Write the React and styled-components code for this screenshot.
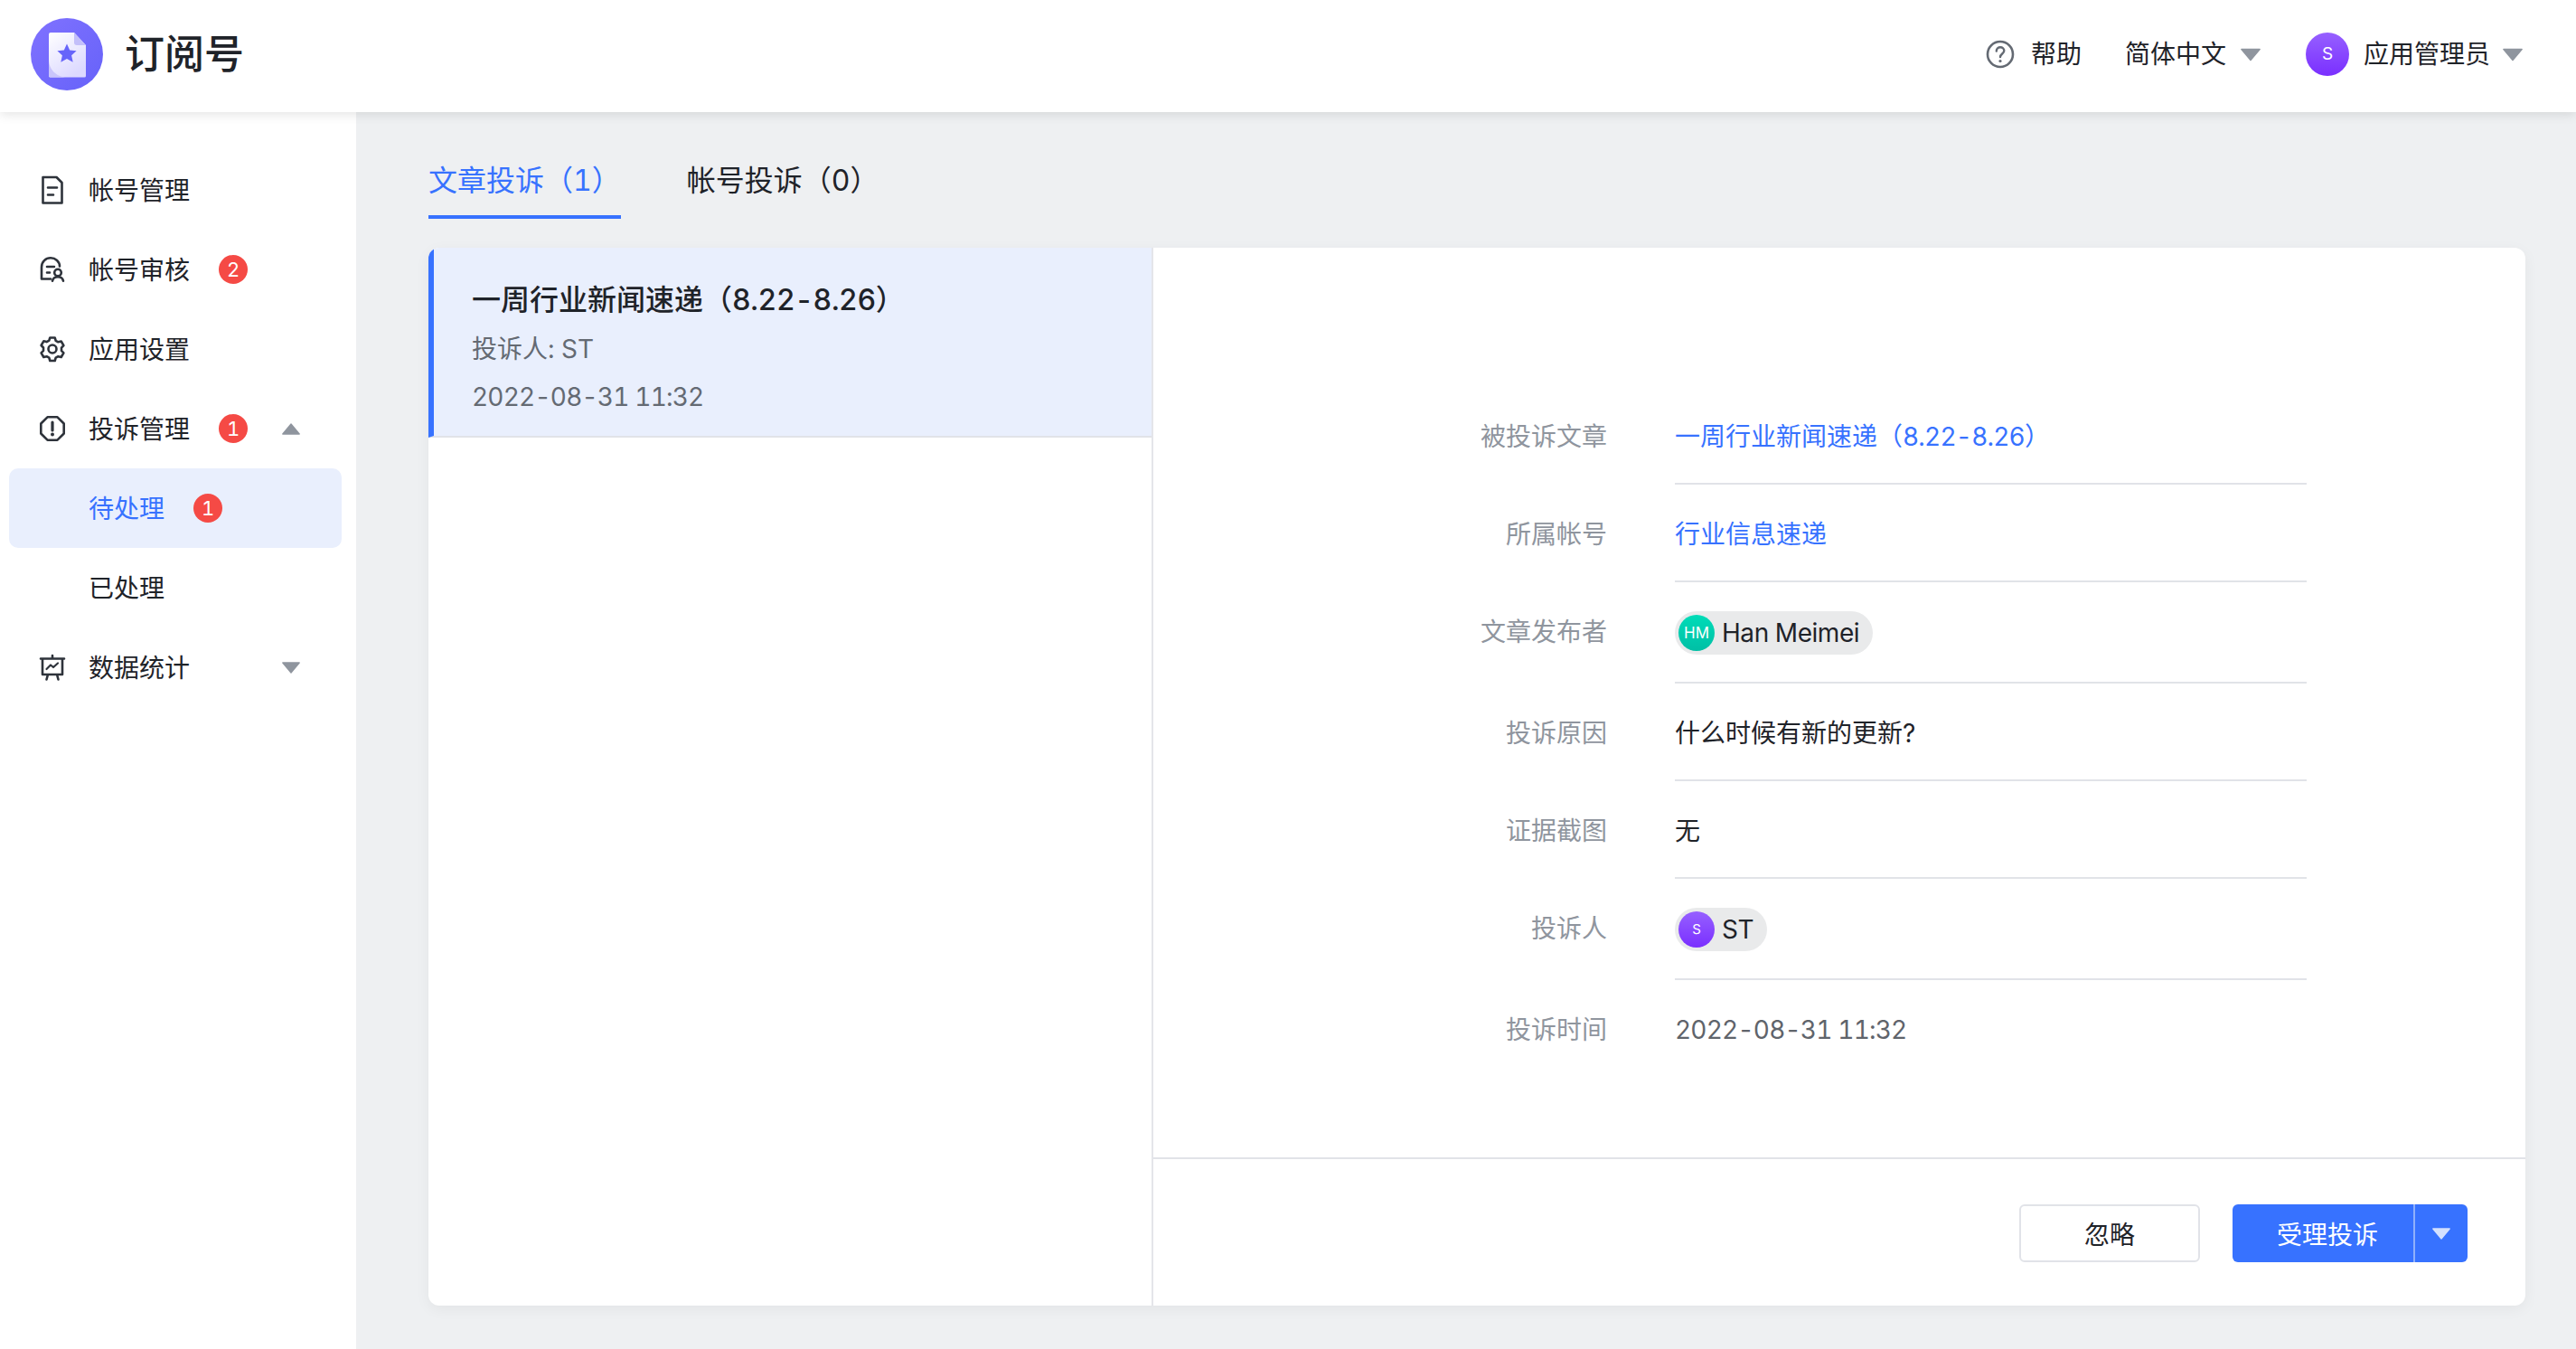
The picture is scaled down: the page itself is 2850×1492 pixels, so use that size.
import React from "react";
import styled, { createGlobalStyle } from "styled-components";

const Global = createGlobalStyle`
  html, body { margin: 0; padding: 0; background: #eef0f2; }
  body { font-family: Inter, "Noto Sans CJK SC", sans-serif; color: #1f2329; font-variant-numeric: tabular-nums; }
  * { box-sizing: border-box; }
`;
const Page = styled.div`
  width: 2850px; height: 1492px; display: flex; flex-direction: column; overflow: hidden;
`;
const Header = styled.header`
  height: 124px; flex: none; background: #fff; display: flex; align-items: center;
  padding: 0 59px 4px 34px; box-shadow: 0 2px 12px rgba(0,0,0,.12); position: relative; z-index: 2;
`;
const Brand = styled.div`display: flex; align-items: center; gap: 24px;`;
const BrandName = styled.div`font-size: 44px; font-weight: 500; color: #1f2329; line-height: 60px;`;
const HeaderRight = styled.div`margin-left: auto; display: flex; align-items: center;`;
const HeadItem = styled.div`
  display: flex; align-items: center; font-size: 28px; line-height: 40px; color: #1f2329;
  gap: ${p => p.$gap || 16}px; margin-left: ${p => p.$ml || 0}px;
`;
const HeadName = styled.span`margin-right: -2px;`;
const Body = styled.div`flex: 1; display: flex; min-height: 0;`;
const Sidebar = styled.nav`width: 394px; flex: none; background: #fff; padding-top: 42px;`;
const NavRow = styled.div`
  height: 88px; display: flex; align-items: center; font-size: 28px; color: #1f2329;
  padding: 0 62px 0 44px;
`;
const SubRow = styled.div`
  height: 88px; width: 368px; margin-left: 10px; display: flex; align-items: center; font-size: 28px;
  padding-left: 88px; border-radius: 10px;
  color: ${p => p.$active ? "#3772ff" : "#1f2329"};
  background: ${p => p.$active ? "#e9effd" : "transparent"};
`;
const NavText = styled.span`padding-bottom: 3px;`;
const NavIcon = styled.svg`width: 28px; height: 28px; flex: none; margin-right: 26px; color: #2e333b; overflow: visible;`;
const Badge = styled.span`
  width: 32px; height: 32px; border-radius: 50%; background: #f54a45; color: #fff; font-size: 22px;
  display: flex; align-items: center; justify-content: center; margin-left: 32px; flex: none;
`;
const CaretSvg = styled.svg`
  flex: none; display: block; width: ${p => p.$w}px; height: ${p => p.$h}px;
  margin-left: ${p => p.$auto ? "auto" : "0"};
  transform: ${p => p.$up ? "rotate(180deg)" : "none"};
`;
const Main = styled.main`flex: 1; min-width: 0; padding: 54px 56px 48px 80px; display: flex; flex-direction: column;`;
const Tabs = styled.div`display: flex; gap: 73px; height: 64px; flex: none;`;
const Tab = styled.div`
  font-size: 32px; line-height: 40px; height: 64px; padding-top: 2px;
  color: ${p => p.$active ? "#3772ff" : "#1f2329"};
  border-bottom: 4px solid ${p => p.$active ? "#3772ff" : "transparent"};
`;
const Panel = styled.section`
  margin-top: 32px; flex: 1; min-height: 0; display: flex; background: #fff; border-radius: 12px;
  overflow: hidden; box-shadow: 0 4px 16px rgba(0,0,0,.05);
`;
const ListPane = styled.div`width: 802px; flex: none; border-right: 2px solid #e4e5ea;`;
const ListItem = styled.div`
  height: 210px; background: #e9effd; border-left: 6px solid #3772ff; border-bottom: 2px solid #e1e3e8;
  padding: 36px 0 0 43px;
`;
const ItemTitle = styled.div`font-size: 32px; font-weight: 500; line-height: 44px; color: #1f2329; margin-left: -1px;`;
const ItemSub = styled.div`font-size: 28px; line-height: 40px; color: #646a73; margin-left: -1px; margin-top: ${p => p.$mt}px;`;
const Num = styled.span`letter-spacing: ${p => p.$ls}px;`;
const DetailPane = styled.div`flex: 1; min-width: 0; display: flex; flex-direction: column;`;
const DetailBody = styled.div`flex: 1; padding: 154px 0 0 200px;`;
const Row = styled.div`display: grid; grid-template-columns: 302px 699px; column-gap: 75px;`;
const Label = styled.div`
  font-size: 28px; line-height: 44px; color: #8f959e; text-align: right; padding: 33px 0 29px;
`;
const Value = styled.div`
  font-size: 28px; line-height: 44px; padding: 33px 0 29px;
  color: ${p => p.$color || "#1f2329"};
  border-bottom: ${p => p.$last ? "0" : "2px solid #e1e3e8"};
`;
const ChipValue = styled(Value)`display: flex; align-items: center; padding: 32px 0 30px;`;
const Chip = styled.div`
  height: 48px; display: inline-flex; align-items: center; gap: 8px; border-radius: 24px; background: #e9eaeb;
  padding: 0 15px 0 4px; font-size: 28px; color: #1f2329; letter-spacing: -0.45px;
`;
const Avatar = styled.span`
  border-radius: 50%; display: flex; align-items: center; justify-content: center; color: #fff; flex: none;
  width: ${p => p.$size}px; height: ${p => p.$size}px; font-size: ${p => p.$font}px; letter-spacing: 0;
  background: linear-gradient(180deg, ${p => p.$from}, ${p => p.$to});
`;
const Footer = styled.div`
  height: 164px; flex: none; border-top: 2px solid #e1e3e8; display: flex; justify-content: flex-end;
  gap: 36px; padding: 50px 64px 0 0;
`;
const GhostButton = styled.div`
  width: 200px; height: 64px; border: 2px solid #e1e3e8; border-radius: 6px; display: flex; align-items: center;
  justify-content: center; font-size: 28px; color: #1f2329; background: #fff;
`;
const SplitButton = styled.div`
  width: 260px; height: 64px; border-radius: 6px; background: #3772ff; display: flex; color: #fff; font-size: 28px;
`;
const SplitMain = styled.div`
  width: 202px; display: flex; align-items: center; justify-content: center; padding-left: 10px;
  border-right: 2px solid #8fb0fb;
`;
const SplitArrow = styled.div`flex: 1; display: flex; align-items: center; justify-content: center;`;

const Caret = ({ w = 20, h = 13, color = "#8f959e", up, auto }) => (
  <CaretSvg $w={w} $h={h} $up={up} $auto={auto} viewBox="0 0 20 13">
    <path d="M.8.300h18.400a.7.7 0 0 1 .5 1.200L10.500 12.500a.7.7 0 0 1-1 0L.3 1.500A.7.7 0 0 1 .8.300z" fill={color} />
  </CaretSvg>
);

const stroke = { fill: "none", stroke: "currentColor", strokeWidth: 2.6, strokeLinejoin: "round", strokeLinecap: "round" };

const DocIcon = () => (
  <NavIcon viewBox="0 0 28 28">
    <path {...stroke} d="M3.500 0H18.500l6 6v22.500h-21z" />
    <path {...stroke} d="M9 11.500h10M9 19.500h6" />
  </NavIcon>
);
const ReviewIcon = () => (
  <NavIcon viewBox="0 0 28 28">
    <path {...stroke} d="M12 24.500H2v-13C2 5.500 6.500 1.300 12 1.300S22 5.500 22 10.500" />
    <path {...stroke} d="M8 11h8M8 17.500h3" />
    <circle {...stroke} cx="20" cy="17.500" r="3.800" />
    <path {...stroke} d="M14 26.700c.5-3 3-4.500 6-4.500s5.500 1.500 6 4.500" />
  </NavIcon>
);
const GearIcon = () => (
  <NavIcon viewBox="0 0 28 28">
    <path {...stroke} d="M11.300 1.500h5.400l1 3.300 2.700 1.500 3.300-.8 2.700 4.700-2.400 2.500v3.100l2.400 2.500-2.700 4.700-3.300-.8-2.700 1.500-1 3.300h-5.400l-1-3.300-2.700-1.500-3.300.8-2.700-4.700 2.400-2.500V12.500L1.600 10l2.700-4.700 3.300.8 2.700-1.500z" />
    <circle {...stroke} cx="14" cy="14" r="4.500" />
  </NavIcon>
);
const AlertIcon = () => (
  <NavIcon viewBox="0 0 28 28">
    <path {...stroke} d="M8.500 1.300h11l7.200 7.200v11l-7.200 7.200h-11l-7.200-7.200v-11z" />
    <path d="M14 7v9" fill="none" stroke="currentColor" strokeWidth="3.200" strokeLinecap="round" />
    <circle cx="14" cy="20.500" r="2" fill="currentColor" />
  </NavIcon>
);
const BoardIcon = () => (
  <NavIcon viewBox="0 0 28 28">
    <path {...stroke} d="M1 4.500h26M3 4.500v17.500h22V4.500M14 1v3.500M9 22 7.500 27.500M19 22l1.500 5.500" />
    <path {...stroke} strokeWidth="2.200" d="M7.500 16l4.500-4.500 3 2.500 5-4.500" />
  </NavIcon>
);
const HelpIcon = () => (
  <svg width="32" height="32" viewBox="0 0 32 32" style={{ display: "block" }}>
    <circle cx="16" cy="16" r="14" fill="none" stroke="#646a73" strokeWidth="2.600" />
    <path d="M11.800 12.500c0-2.600 2-4.200 4.300-4.200s4.200 1.500 4.200 3.800c0 3.400-4.300 3.500-4.300 7" fill="none" stroke="#646a73" strokeWidth="2.400" strokeLinecap="round" />
    <circle cx="16" cy="23.500" r="1.600" fill="#646a73" />
  </svg>
);
const Logo = () => (
  <svg width="80" height="80" viewBox="0 0 80 80" style={{ display: "block" }}>
    <defs>
      <linearGradient id="lg-bg" x1="0" y1="0" x2="1" y2="1">
        <stop offset="0" stopColor="#8072ff" />
        <stop offset="1" stopColor="#6662f9" />
      </linearGradient>
      <linearGradient id="lg-doc" x1="0" y1="0" x2="0.6" y2="1">
        <stop offset="0" stopColor="#ffffff" />
        <stop offset="1" stopColor="#dcd9ff" />
      </linearGradient>
    </defs>
    <circle cx="40" cy="40" r="40" fill="url(#lg-bg)" />
    <path d="M22 16h26l13 14v34a1.500 1.500 0 0 1-1.500 1.500H22A1.500 1.500 0 0 1 20 64V18a2 2 0 0 1 2-2z" fill="url(#lg-doc)" />
    <path d="M20 46c0 11 9 19.500 20 19.500H22a2 2 0 0 1-2-2z" fill="#c9c5fb" />
    <path d="M48 16l13 14H51a3 3 0 0 1-3-3z" fill="#c3bffa" />
    <path d="M40 28.500l3.200 7 7.400.8-5.500 5 1.600 7.400-6.700-3.800-6.700 3.800 1.600-7.400-5.500-5 7.400-.8z" fill="#6765fa" />
  </svg>
);

const rows = [
  ["被投诉文章", <Value key="v" $color="#3772ff">一周行业新闻速递（<Num $ls={-0.8}>8.22-8.26</Num>）</Value>],
  ["所属帐号", <Value key="v" $color="#3772ff">行业信息速递</Value>],
  ["文章发布者", <ChipValue key="v"><Chip><Avatar $size={40} $font={17} $from="#00dcb8" $to="#00bfa5">HM</Avatar>Han Meimei</Chip></ChipValue>],
  ["投诉原因", <Value key="v">什么时候有新的更新?</Value>],
  ["证据截图", <Value key="v">无</Value>],
  ["投诉人", <ChipValue key="v"><Chip><Avatar $size={40} $font={15} $from="#9660ff" $to="#7a2fff">S</Avatar>ST</Chip></ChipValue>],
  ["投诉时间", <Value key="v" $color="#5f646b" $last><Num $ls={-0.8}>2022-08-31 11:32</Num></Value>],
];

export default function App() {
  return (
    <Page>
      <Global />
      <Header>
        <Brand><Logo /><BrandName>订阅号</BrandName></Brand>
        <HeaderRight>
          <HeadItem $gap={18}><HelpIcon />帮助</HeadItem>
          <HeadItem $ml={48}>简体中文<Caret w={22} h={15} /></HeadItem>
          <HeadItem $ml={50}>
            <Avatar $size={48} $font={19} $from="#9660ff" $to="#7a2fff">S</Avatar>
            <HeadName>应用管理员</HeadName><Caret w={22} h={15} />
          </HeadItem>
        </HeaderRight>
      </Header>
      <Body>
        <Sidebar>
          <NavRow><DocIcon /><NavText>帐号管理</NavText></NavRow>
          <NavRow><ReviewIcon /><NavText>帐号审核</NavText><Badge>2</Badge></NavRow>
          <NavRow><GearIcon /><NavText>应用设置</NavText></NavRow>
          <NavRow><AlertIcon /><NavText>投诉管理</NavText><Badge>1</Badge><Caret up auto /></NavRow>
          <SubRow $active><NavText>待处理</NavText><Badge>1</Badge></SubRow>
          <SubRow><NavText>已处理</NavText></SubRow>
          <NavRow><BoardIcon /><NavText>数据统计</NavText><Caret auto /></NavRow>
        </Sidebar>
        <Main>
          <Tabs>
            <Tab $active>文章投诉（1）</Tab>
            <Tab>帐号投诉（0）</Tab>
          </Tabs>
          <Panel>
            <ListPane>
              <ListItem>
                <ItemTitle>一周行业新闻速递（<Num $ls={-0.4}>8.22-8.26</Num>）</ItemTitle>
                <ItemSub $mt={12}>投诉人: ST</ItemSub>
                <ItemSub $mt={13}><Num $ls={-0.8}>2022-08-31 11:32</Num></ItemSub>
              </ListItem>
            </ListPane>
            <DetailPane>
              <DetailBody>
                {rows.map(([label, value]) => (
                  <Row key={label}><Label>{label}</Label>{value}</Row>
                ))}
              </DetailBody>
              <Footer>
                <GhostButton>忽略</GhostButton>
                <SplitButton>
                  <SplitMain>受理投诉</SplitMain>
                  <SplitArrow><Caret color="#d3e0fe" /></SplitArrow>
                </SplitButton>
              </Footer>
            </DetailPane>
          </Panel>
        </Main>
      </Body>
    </Page>
  );
}
